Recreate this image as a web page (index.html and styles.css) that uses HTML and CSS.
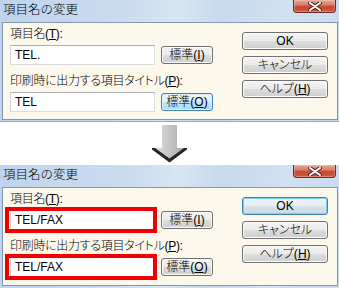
FILE: index.html
```html
<!DOCTYPE html>
<html lang="ja">
<head>
<meta charset="utf-8">
<title>項目名の変更</title>
<link rel="stylesheet" href="styles.css">
</head>
<body>
<div class="dialog top">
  <div class="titlebar">
    <span class="title">項目名の変更</span>
    <span class="close"><svg width="14" height="9" viewBox="0 0 14 9"><path d="M2 1 L12 8 M12 1 L2 8" stroke="#4a1a14" stroke-width="3.8" stroke-linecap="round"/><path d="M2 1 L12 8 M12 1 L2 8" stroke="#ffffff" stroke-width="2.1" stroke-linecap="round"/></svg></span>
  </div>
  <div class="client">
    <div class="fields">
      <div class="lbl">項目名(<u>T</u>):</div>
      <div class="row"><div class="input"><span class="val">TEL.</span></div><div class="btn small">標準(<u>I</u>)</div></div>
      <div class="lbl">印刷時に出力する項目タイトル(<u>P</u>):</div>
      <div class="row"><div class="input"><span class="val">TEL</span></div><div class="btn small focus">標準(<u>O</u>)</div></div>
    </div>
    <div class="actions">
      <div class="btn wide">OK</div>
      <div class="btn wide">キャンセル</div>
      <div class="btn wide">ヘルプ(<u>H</u>)</div>
    </div>
  </div>
</div>
<div class="arrow">
  <svg width="36" height="38" viewBox="0 0 36 38">
    <defs>
      <linearGradient id="ag" x1="0" y1="0" x2="1" y2="0">
        <stop offset="0" stop-color="#e4e4e4"/>
        <stop offset="0.5" stop-color="#c4c4c4"/>
        <stop offset="1" stop-color="#a8a8a8"/>
      </linearGradient>
    </defs>
    <polygon points="10,0 25,0 25,23 35,23 17.5,36 0,23 10,23" fill="url(#ag)"/>
    <polygon points="0,23 3,23 17.5,33.5 32,23 35,23 35,24.5 17.5,37.5 0,24.5" fill="#262626"/>
  </svg>
</div>
<div class="dialog bottom">
  <div class="titlebar">
    <span class="title">項目名の変更</span>
    <span class="close"><svg width="14" height="9" viewBox="0 0 14 9"><path d="M2 1 L12 8 M12 1 L2 8" stroke="#4a1a14" stroke-width="3.8" stroke-linecap="round"/><path d="M2 1 L12 8 M12 1 L2 8" stroke="#ffffff" stroke-width="2.1" stroke-linecap="round"/></svg></span>
  </div>
  <div class="client">
    <div class="fields">
      <div class="lbl">項目名(<u>T</u>):</div>
      <div class="row"><div class="input marked"><span class="val">TEL/FAX</span></div><div class="btn small">標準(<u>I</u>)</div></div>
      <div class="lbl">印刷時に出力する項目タイトル(<u>P</u>):</div>
      <div class="row"><div class="input marked"><span class="val">TEL/FAX</span></div><div class="btn small">標準(<u>O</u>)</div></div>
    </div>
    <div class="actions">
      <div class="btn wide default">OK</div>
      <div class="btn wide">キャンセル</div>
      <div class="btn wide">ヘルプ(<u>H</u>)</div>
    </div>
  </div>
</div>
</body>
</html>
```

FILE: styles.css
```css
html, body {
  margin: 0;
  padding: 0;
}
body {
  width: 339px;
  height: 288px;
  overflow: hidden;
  background: #ffffff;
  font-family: "Liberation Sans", "Noto Sans CJK JP", sans-serif;
  font-size: 12px;
  font-weight: 300;
  color: #000;
  font-feature-settings: "palt";
}
.dialog {
  background: linear-gradient(100deg, #bfd4ec 0%, #c9dbef 35%, #d8e6f4 50%, #c6d9ee 62%, #d2e1f2 80%, #c8daef 100%);
  padding: 0 1px 1px 2px;
}
.dialog.top {
  border-bottom: 1px solid #9aa4b2;
}
.dialog.bottom {
  padding-bottom: 2px;
}
.titlebar {
  height: 22px;
  display: flex;
  justify-content: space-between;
  align-items: flex-start;
}
.title {
  padding-left: 1px;
  padding-top: 2px;
  line-height: 16px;
  font-size: 12.5px;
  font-feature-settings: normal;
}
.close {
  width: 43px;
  height: 13px;
  box-sizing: border-box;
  margin-right: 2px;
  border: 1px solid #6b2a20;
  border-top: none;
  border-radius: 0 0 4px 4px;
  background: linear-gradient(#e7a596 0%, #d9806c 40%, #c6472f 55%, #cc5a3f 100%);
  display: flex;
  align-items: center;
  justify-content: center;
  box-shadow: inset 0 0 0 1px rgba(255,220,210,0.35);
}
.client {
  height: 98px;
  box-sizing: border-box;
  background: #fcf8ec;
  border: 1px solid #8595aa;
  display: flex;
  padding: 4px 9px 0 7px;
}
.bottom .client {
  height: 99px;
}
.fields {
  display: flex;
  flex-direction: column;
}
.lbl {
  height: 15px;
  line-height: 15px;
  margin-bottom: 3px;
  white-space: nowrap;
  letter-spacing: -0.3px;
}
.row {
  display: flex;
  align-items: center;
  gap: 6px;
  height: 20px;
  margin-bottom: 9px;
}
.input {
  position: relative;
  width: 145px;
  height: 20px;
  box-sizing: border-box;
  background: #ffffff;
  border: 1px solid #d9dde3;
  border-top-color: #a9acb2;
  border-left-color: #d0d4da;
  padding-left: 4px;
  display: flex;
  align-items: center;
}
.val {
  line-height: 14px;
}
.input.marked::after {
  content: "";
  position: absolute;
  left: -6px;
  right: -3px;
  top: -4px;
  bottom: -4px;
  border: 4px solid #f00000;
}
.btn {
  height: 18px;
  box-sizing: border-box;
  border: 1px solid #707070;
  border-radius: 3px;
  background: linear-gradient(#f3f3f3 0%, #ebebeb 48%, #dcdcdc 52%, #cfcfcf 100%);
  box-shadow: inset 0 0 0 1px #fbfbfb;
  display: flex;
  align-items: center;
  justify-content: center;
  line-height: 14px;
  white-space: nowrap;
}
.small {
  width: 52px;
}
.btn.focus {
  border-color: #3c7fb1;
  background: linear-gradient(#eaf6fd 0%, #d9f0fc 48%, #bee6fd 52%, #a7d9f5 100%);
  box-shadow: inset 0 0 0 1px #dff2fc;
}
.actions {
  margin-left: auto;
  margin-top: 5px;
  display: flex;
  flex-direction: column;
  gap: 6px;
}
.wide {
  width: 86px;
}
.btn.default {
  border-color: #3c7fb1;
  background: linear-gradient(#f0f6fa 0%, #e6eef3 48%, #d8e3ea 52%, #ccdae3 100%);
  box-shadow: inset 0 0 0 1px #7fd2f6;
}
.arrow {
  height: 43px;
  display: flex;
  justify-content: center;
  align-items: flex-start;
  padding-top: 3px;
  box-sizing: border-box;
}
.arrow svg {
  margin-left: 1px;
}
```
